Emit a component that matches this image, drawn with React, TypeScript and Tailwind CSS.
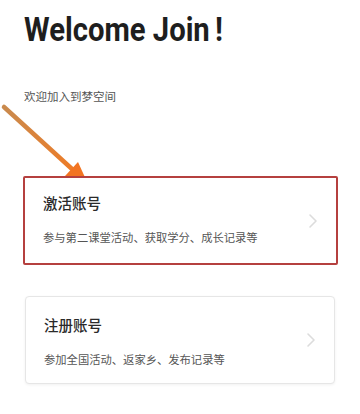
import React from "react";

function Chevron() {
  return (
    <svg width="10" height="16" viewBox="0 0 10 16" fill="none">
      <path d="M2 2 L8 8 L2 14" stroke="#dcdcdc" strokeWidth="1.6" strokeLinecap="round" strokeLinejoin="round" />
    </svg>
  );
}

export default function App() {
  const cjk = { fontFamily: '"Noto Sans CJK SC", "Noto Sans", sans-serif' };
  return (
    <div className="relative w-[360px] h-[414px] bg-white overflow-hidden">
      <svg className="absolute left-0 top-0 pointer-events-none" width="360" height="414" viewBox="0 0 360 414">
        <defs>
          <linearGradient id="ag" x1="4" y1="107" x2="82" y2="178" gradientUnits="userSpaceOnUse">
            <stop offset="0" stopColor="#c98a4e" />
            <stop offset="1" stopColor="#f27a22" />
          </linearGradient>
        </defs>
        <line x1="4" y1="107" x2="72" y2="169" stroke="url(#ag)" strokeWidth="4.5" strokeLinecap="round" />
        <polygon points="88,184 65,176 78,162" fill="#f27422" />
      </svg>

      <div className="relative flex flex-col pt-[9px]">
        <h1
          className="ml-6 text-[34px] leading-[40px] font-bold text-[#1e1e1e] origin-left scale-x-[0.86] whitespace-nowrap"
          style={{ fontFamily: 'Roboto, "Liberation Sans", sans-serif' }}
        >
          Welcome Join<span className="ml-[6px]">!</span>
        </h1>
        <p className="ml-6 mt-[39px] text-[11.5px] leading-[16px] text-[#555]" style={cjk}>
          欢迎加入到梦空间
        </p>

        <div
          className="relative mt-[72px] ml-[23px] mr-[22px] h-[89px] border-2 border-[#b5403f] rounded-[2px] flex items-start pl-[18px] pr-[18px] bg-white"
          style={cjk}
        >
          <div className="flex-1 flex flex-col pt-[15px]">
            <div className="text-[14.5px] leading-[20px] font-medium text-[#2a2a2a]">激活账号</div>
            <div className="mt-[16px] text-[11.3px] leading-[16px] text-[#555]">
              参与第二课堂活动、获取学分、成长记录等
            </div>
          </div>
          <div className="self-center">
            <Chevron />
          </div>
        </div>

        <div
          className="relative mt-[31px] mx-[25px] h-[88px] border border-[#e6e6e6] rounded-[4px] shadow-[0_1px_3px_rgba(0,0,0,0.06)] flex items-start pl-[18px] pr-[18px] bg-white"
          style={cjk}
        >
          <div className="flex-1 flex flex-col pt-[18px]">
            <div className="text-[14.5px] leading-[20px] font-medium text-[#2a2a2a]">注册账号</div>
            <div className="mt-[16px] text-[11.3px] leading-[16px] text-[#555]">
              参加全国活动、返家乡、发布记录等
            </div>
          </div>
          <div className="self-center">
            <Chevron />
          </div>
        </div>
      </div>
    </div>
  );
}
